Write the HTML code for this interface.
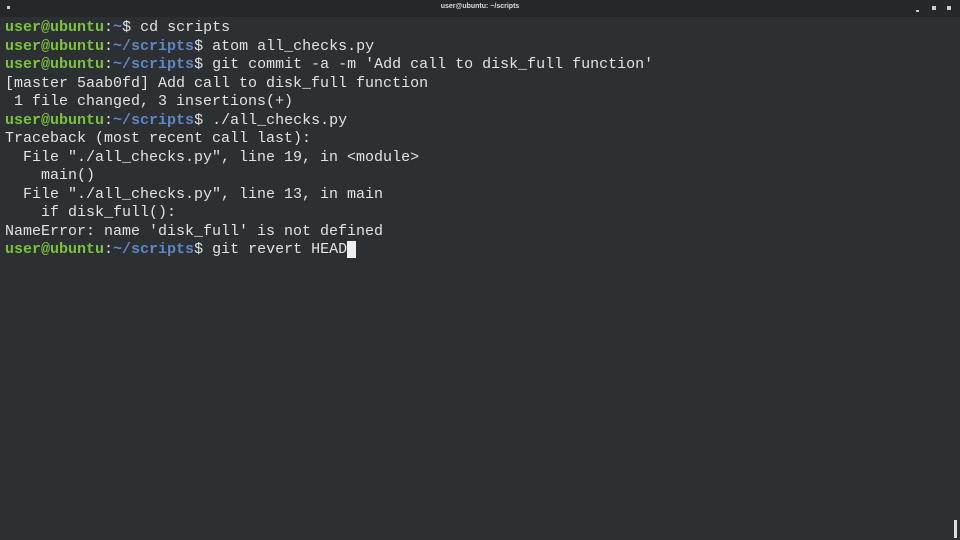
<!DOCTYPE html>
<html><head><meta charset="utf-8"><style>
html,body{margin:0;padding:0;width:960px;height:540px;overflow:hidden;background:#2c3032;}
#tb{position:absolute;left:0;top:0;width:960px;height:17px;background:#252829;}
#tt{position:absolute;left:0;width:960px;top:3px;text-align:center;font:bold 7px "Liberation Sans",sans-serif;color:#ddd;}
pre{position:absolute;left:5px;top:19px;margin:0;font:15px/18.5px "Liberation Mono",monospace;color:#e2e2e2;}
.g{color:#7cc23a;font-weight:bold}
.b{color:#5f86c4;font-weight:bold}
.c{background:#eee;color:#2c3032}
</style></head><body>
<div id="tb"><div style="position:absolute;left:7px;top:6px;width:3px;height:3px;background:#ccc"></div><div id="tt">user@ubuntu: ~/scripts</div>
<div style="position:absolute;left:916px;top:10px;width:3px;height:2px;background:#ccc"></div>
<div style="position:absolute;left:932px;top:6px;width:4px;height:4px;background:#ccc"></div>
<div style="position:absolute;left:947px;top:6px;width:4px;height:4px;background:#ccc"></div></div>
<pre><span class="g">user@ubuntu</span>:<span class="b">~</span>$ cd scripts
<span class="g">user@ubuntu</span>:<span class="b">~/scripts</span>$ atom all_checks.py
<span class="g">user@ubuntu</span>:<span class="b">~/scripts</span>$ git commit -a -m 'Add call to disk_full function'
[master 5aab0fd] Add call to disk_full function
 1 file changed, 3 insertions(+)
<span class="g">user@ubuntu</span>:<span class="b">~/scripts</span>$ ./all_checks.py
Traceback (most recent call last):
  File "./all_checks.py", line 19, in &lt;module&gt;
    main()
  File "./all_checks.py", line 13, in main
    if disk_full():
NameError: name 'disk_full' is not defined
<span class="g">user@ubuntu</span>:<span class="b">~/scripts</span>$ git revert HEAD<span class="c"> </span></pre>
<div style="position:absolute;left:954px;top:520px;width:3px;height:18px;background:#ddd"></div>
</body></html>
